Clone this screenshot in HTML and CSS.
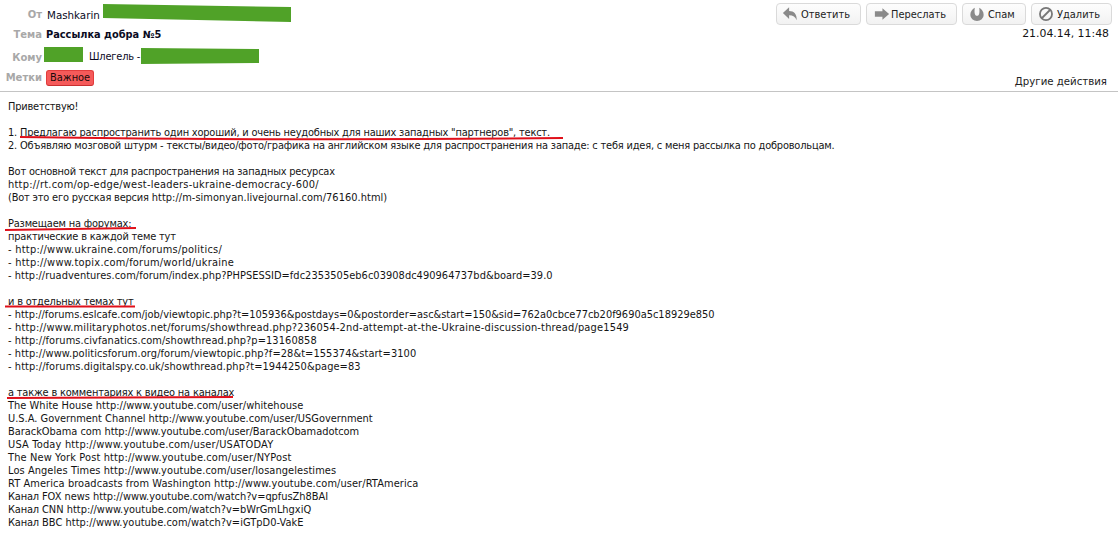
FILE: index.html
```html
<!DOCTYPE html>
<html lang="ru">
<head>
<meta charset="utf-8">
<title>Рассылка добра №5</title>
<link rel="stylesheet" href="styles.css">
</head>
<body>
<div class="page">
  <header class="head">
    <div class="fields">
      <div class="field f-from"><span class="label">От</span><span class="value">Mashkarin</span></div>
      <div class="field f-subj"><span class="label">Тема</span><span class="value strong">Рассылка добра №5</span></div>
      <div class="field f-to"><span class="label">Кому</span><span class="value to ru">Шлегель -</span></div>
      <div class="field f-tags"><span class="label">Метки</span><span class="tag">Важное</span></div>
    </div>
    <div class="side">
      <div class="buttons">
        <button class="btn b-reply"><svg viewBox="0 0 18 18" class="ico"><path d="M1 8 8 1.500v4c5.500 0 9 3.500 8.500 10.500-1.500-3.500-4-5.500-8.500-5.500v4z"/></svg><span>Ответить</span></button>
        <button class="btn b-fwd"><svg viewBox="0 0 18 18" class="ico"><path d="M1 6h8.500V2.500L17 9l-7.500 6.500V12H1z"/></svg><span>Переслать</span></button>
        <button class="btn b-spam"><svg viewBox="0 0 18 18" class="ico"><path fill-rule="evenodd" d="M6.500 2C3.500 3.500 1.500 6.500 1.500 10a7.500 7 0 0 0 15 0c0-3.500-2-6.500-5-8 .3 2.500.5 5.500-.3 7.500-.4 1-1.200 1.500-2.200 1.500s-1.800-.5-2.200-1.500C6 7.500 6.200 4.500 6.500 2z"/></svg><span>Спам</span></button>
        <button class="btn b-del"><svg viewBox="0 0 18 18" class="ico"><circle cx="9" cy="9" r="6.800" class="ring"/><path d="M4.500 13.500 13.500 4.500" class="ring"/></svg><span>Удалить</span></button>
      </div>
      <div class="date">21.04.14, 11:48</div>
      <div class="more">Другие действия</div>
    </div>
  </header>
  <main class="body">
    <p class="ru">Приветствую!</p>
    <p class="ru">1. Предлагаю распространить один хороший, и очень неудобных для наших западных "партнеров", текст.<br>2. Объявляю мозговой штурм - тексты/видео/фото/графика на английском языке для распространения на западе: с тебя идея, с меня рассылка по добровольцам.</p>
    <p><span class="ru">Вот основной текст для распространения на западных ресурсах</span><br><span class="s1">http://rt.com/op-edge/west-leaders-ukraine-democracy-600/</span><br><span class="ru">(Вот это его русская версия </span><span class="s4">http://m-simonyan.livejournal.com/76160.html)</span></p>
    <p><span class="ru">Размещаем на форумах:<br>практические в каждой теме тут</span><br><span class="s1">- http://www.ukraine.com/forums/politics/</span><br><span class="s1">- http://www.topix.com/forum/world/ukraine</span><br><span class="s4">- http://ruadventures.com/forum/index.php?PHPSESSID=fdc2353505eb6c03908dc490964737bd&amp;board=39.0</span></p>
    <p><span class="ru">и в отдельных темах тут</span><br>- http://forums.eslcafe.com/job/viewtopic.php?t=105936&amp;postdays=0&amp;postorder=asc&amp;start=150&amp;sid=762a0cbce77cb20f9690a5c18929e850<br><span class="s2">- http://www.militaryphotos.net/forums/showthread.php?236054-2nd-attempt-at-the-Ukraine-discussion-thread/page1549</span><br><span class="s3">- http://forums.civfanatics.com/showthread.php?p=13160858</span><br><span class="s3">- http://www.politicsforum.org/forum/viewtopic.php?f=28&amp;t=155374&amp;start=3100</span><br><span class="s3">- http://forums.digitalspy.co.uk/showthread.php?t=1944250&amp;page=83</span></p>
    <p><span class="ru">а также в комментариях к видео на каналах</span><br><span class="s4">The White House http://www.youtube.com/user/whitehouse</span><br>U.S.A. Government Channel http://www.youtube.com/user/USGovernment<br><span class="s6">BarackObama com http://www.youtube.com/user/BarackObamadotcom</span><br><span class="s2">USA Today http://www.youtube.com/user/USATODAY</span><br><span class="s5">The New York Post http://www.youtube.com/user/NYPost</span><br><span class="s3">Los Angeles Times http://www.youtube.com/user/losangelestimes</span><br><span class="s3">RT America broadcasts from Washington http://www.youtube.com/user/RTAmerica</span><br><span class="s6"><span class="ru">Канал</span> FOX news http://www.youtube.com/watch?v=qpfusZh8BAI</span><br><span class="ru">Канал</span> CNN http://www.youtube.com/watch?v=bWrGmLhgxiQ<br><span class="s4"><span class="ru">Канал</span> BBC http://www.youtube.com/watch?v=iGTpD0-VakE</span></p>
  </main>
  <svg class="marks" viewBox="0 0 1118 538" aria-hidden="true">
    <polygon class="green" points="103,4 291,7 291,22 103,18"/>
    <polygon class="green" points="44,47 83,47 83,62 44,62"/>
    <polygon class="green" points="141,48 259,49 259,63 141,64"/>
    <path class="red" d="M20 137 Q300 141 563 138"/>
    <path class="red" d="M5 230 L136 228"/>
    <path class="red" d="M5 306.500 L135 306.500"/>
    <path class="red" d="M7 398 L233 397"/>
  </svg>
</div>
</body>
</html>
```
FILE: styles.css
```css
* { box-sizing: border-box; }
html, body { margin: 0; padding: 0; background: #fff; }
body { font-family: "DejaVu Sans", "Liberation Sans", sans-serif; font-size: 9.86px; color: #141414; }
.page { position: relative; width: 1118px; height: 538px; overflow: hidden; }
.head { display: flex; justify-content: space-between; height: 92px; border-bottom: 1px solid #c4c4c4; }
.fields { display: flex; flex-direction: column; padding-top: 8px; }
.field { display: flex; align-items: center; gap: 4px; height: 13px; }
.f-subj { margin-top: 7px; }
.f-to { margin-top: 9px; }
.f-to .label { padding-top: 2px; }
.f-tags { margin-top: 8px; }
.label { width: 42px; text-align: right; font-weight: 700; color: #a8a8a8; font-size: 10px; }
.value { color: #0a0a1e; }
.f-from .value { font-size: 10.3px; margin-left: 1px; }
.strong { font-weight: 700; font-size: 9.8px; }
.to { margin-left: 43px; }
.tag { background: #f55a5a; border: 1px solid #e23c3c; border-bottom-color: #c93030; border-radius: 3px; padding: 0 3px; line-height: 14px; height: 16px; color: #1a0a0a; }
.side { display: flex; flex-direction: column; align-items: flex-end; padding: 3px 6px 0 0; }
.buttons { display: flex; gap: 5px; }
.btn { display: flex; align-items: center; gap: 3px; height: 22px; padding: 0 0 0 5px; background: linear-gradient(#fdfdfd, #f2f2f2); border: 1px solid #dadada; border-radius: 4px; font: inherit; color: #222; }
.b-reply { width: 85px; }
.b-fwd { width: 91px; padding-left: 7px; gap: 1px; }
.b-spam { width: 64px; padding-left: 6px; }
.b-del { width: 81px; padding-left: 6px; }
.ico { width: 16px; height: 16px; fill: #8a8a8a; }
.ring { fill: none; stroke: #777; stroke-width: 2; }
.date { margin: 2px 3px 0 0; line-height: 13px; font-size: 10.9px; }
.more { margin: 35px 5px 0 0; line-height: 13px; font-size: 10.2px; color: #222; }
.body { padding: 8px 8px 0; line-height: 13px; white-space: nowrap; }
.body p { margin: 0 0 13px; }
.ru { letter-spacing: -0.19px; }
.s1 { letter-spacing: 0.25px; }
.s2 { letter-spacing: 0.18px; }
.s3 { letter-spacing: 0.08px; }
.s4 { letter-spacing: 0.04px; }
.s5 { letter-spacing: 0.13px; }
.s6 { letter-spacing: -0.03px; }
.marks { position: absolute; left: 0; top: 0; width: 1118px; height: 538px; pointer-events: none; }
.green { fill: #50a228; }
.red { fill: none; stroke: #e0101a; stroke-width: 2; }
```
